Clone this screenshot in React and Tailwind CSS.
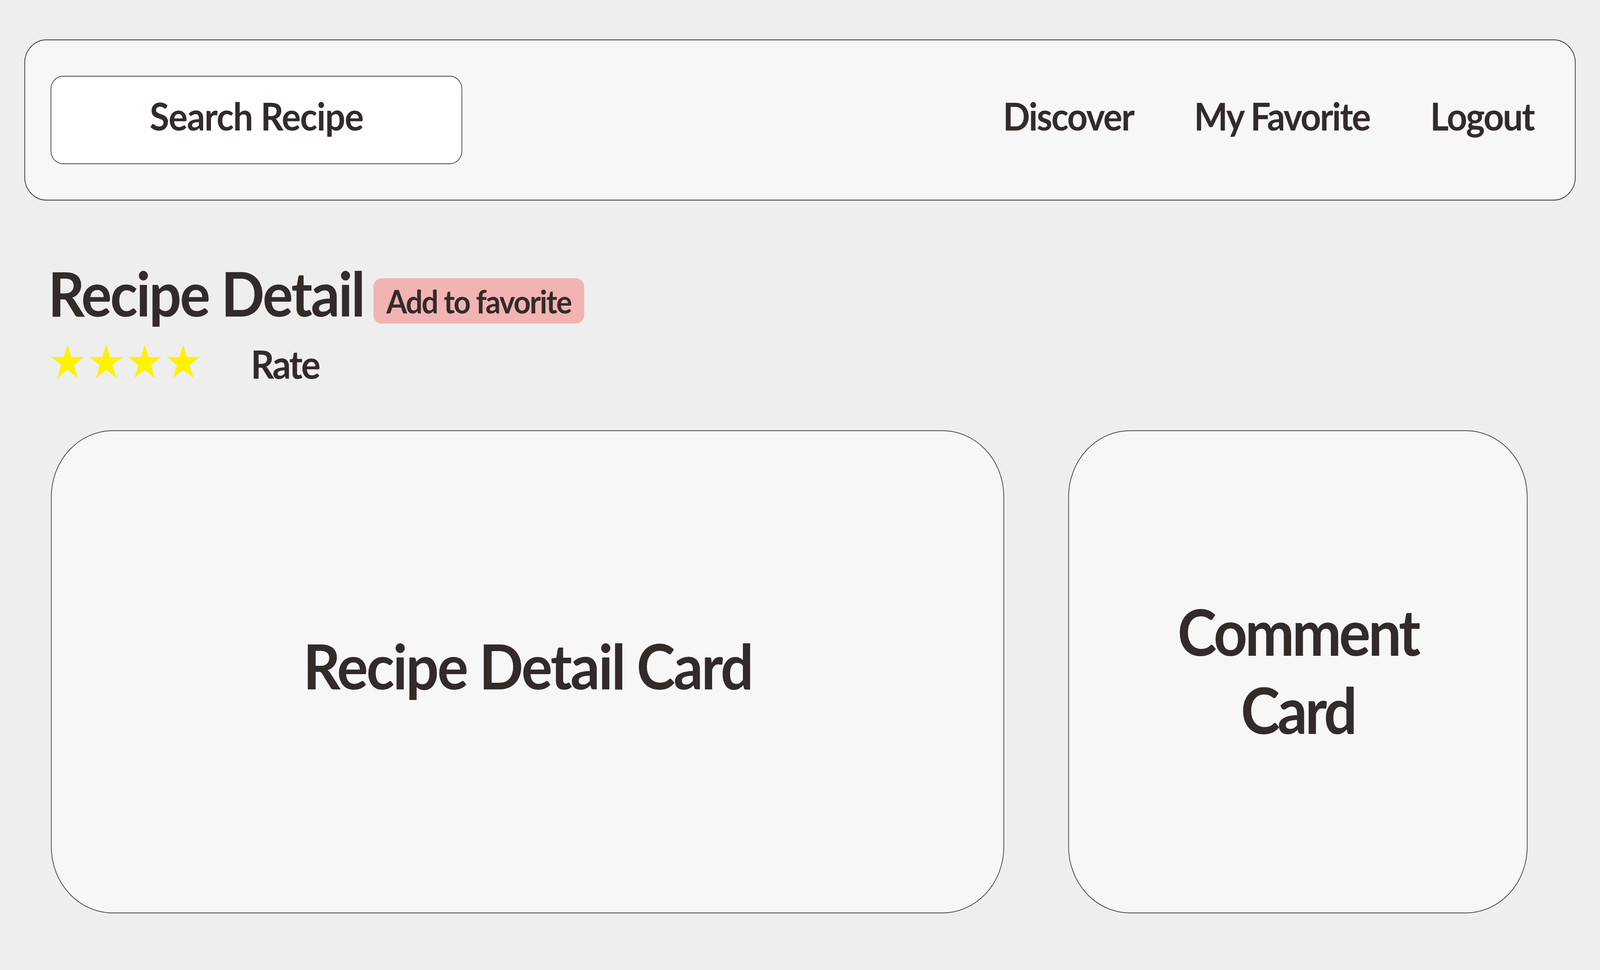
import React from "react";

const Star = () => (
  <svg width="91" height="86" viewBox="0 0 100 95" className="block">
    <polygon
      points="50,0 61.8,36.3 100,36.3 69.1,58.8 80.9,95 50,72.6 19.1,95 30.9,58.8 0,36.3 38.2,36.3"
      fill="#fff200"
    />
  </svg>
);

export default function App() {
  return (
    <div className="w-full overflow-hidden bg-[#eeeeee]">
      <div
        className="w-[4396px] h-[2482px] origin-top-left scale-x-[0.931756] bg-[#eeeeee] pt-[101px] text-[#332b29]"
        style={{ fontFamily: "Lato, 'Liberation Sans', sans-serif" }}
      >
        <header className="mx-[67px] h-[412px] border-2 border-[#333333] rounded-[60px] bg-[#f7f7f7] flex items-center justify-between pl-[70px] pr-[112px]">
          <div className="w-[1131px] h-[226px] bg-white border-2 border-[#444444] rounded-[34px] flex items-center justify-center">
            <span className="mb-[23px] text-[98px] leading-[100px] font-bold tracking-[-0.018em]">Search Recipe</span>
          </div>
          <nav className="mb-[23px] flex items-center gap-[166px] text-[98px] leading-[100px] font-bold">
            <span className="tracking-[-0.029em]">Discover</span>
            <span className="tracking-[-0.033em]">My Favorite</span>
            <span className="tracking-[-0.03em]">Logout</span>
          </nav>
        </header>

        <main className="pl-[140px] pt-[155px]">
          <div className="flex items-end">
            <h1 className="-ml-[8px] text-[157px] leading-[162px] font-bold tracking-[-0.028em]">Recipe Detail</h1>
            <span className="ml-[26px] mb-[2px] h-[116px] px-[36px] flex items-center bg-[#f2b3b3] rounded-[22px] text-[82px] leading-[84px] font-bold tracking-[-0.035em]">
              Add to favorite
            </span>
          </div>
          <div className="mt-[49px] flex items-start">
            <div className="mt-[2px] flex gap-[15px]">
              <Star />
              <Star />
              <Star />
              <Star />
            </div>
            <span className="ml-[140px] text-[100px] leading-[102px] font-bold tracking-[-0.04em]">Rate</span>
          </div>

          <div className="mt-[120px] flex gap-[176px]">
            <section className="w-[2619px] h-[1236px] border-2 border-[#444444] rounded-[170px] bg-[#f7f7f7] flex items-center justify-center">
              <span className="mb-[34px] text-[160px] leading-[160px] font-bold tracking-[-0.029em]">Recipe Detail Card</span>
            </section>
            <section className="w-[1262px] h-[1236px] border-2 border-[#444444] rounded-[170px] bg-[#f7f7f7] flex items-center justify-center">
              <span className="mb-[6px] text-[162px] leading-[200px] font-bold text-center tracking-[-0.04em]">
                Comment
                <br />
                Card
              </span>
            </section>
          </div>
        </main>
      </div>
    </div>
  );
}
